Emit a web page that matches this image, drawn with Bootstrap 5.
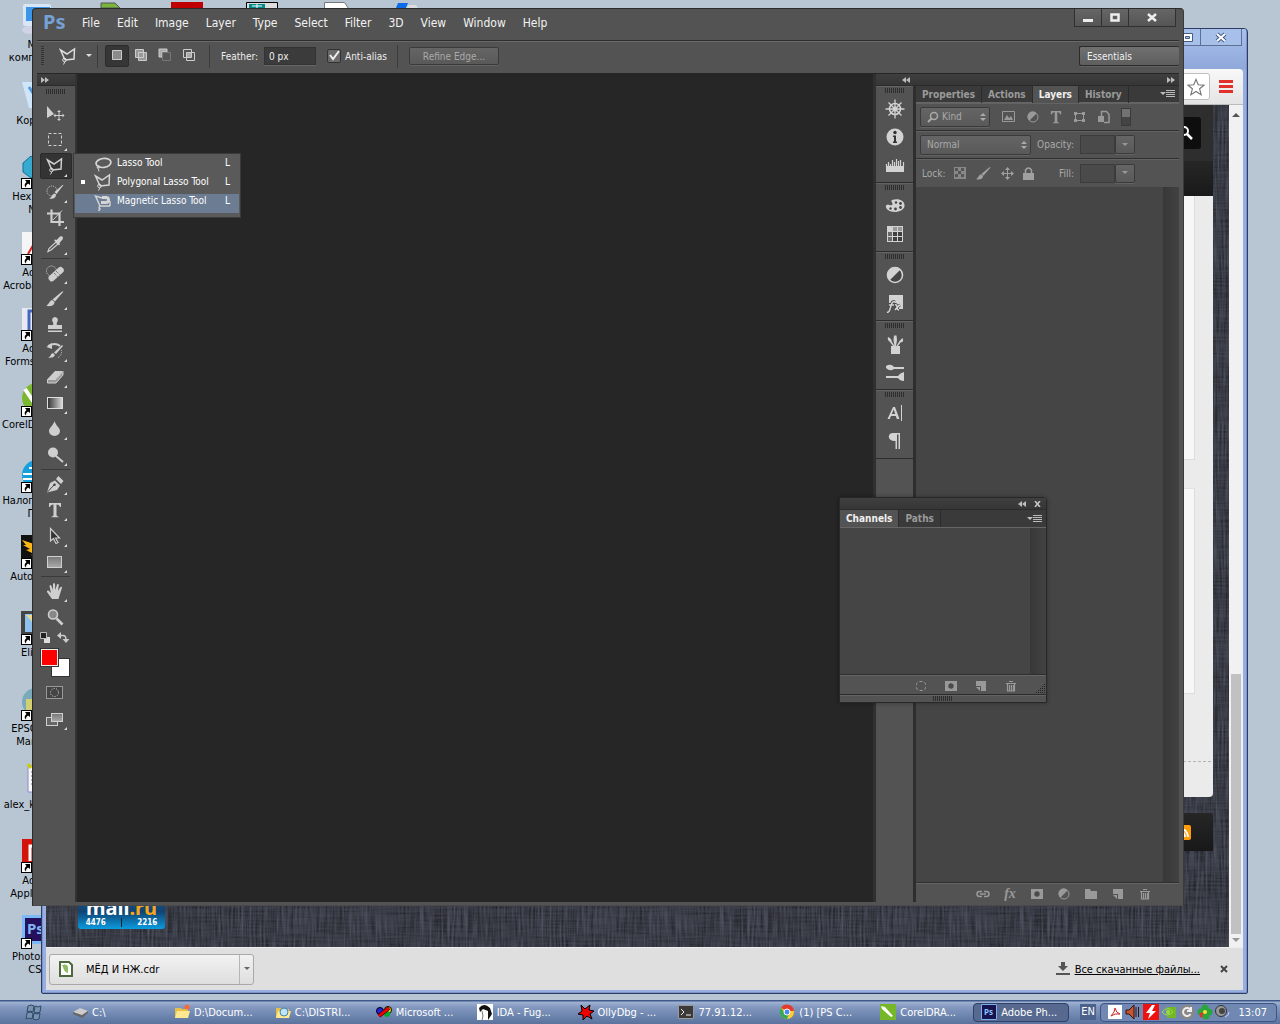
<!DOCTYPE html>
<html lang="en">
<head>
<meta charset="utf-8">
<meta name="viewport" content="width=device-width, initial-scale=1">
<title>Desktop</title>
<link href="https://cdn.jsdelivr.net/npm/bootstrap@5.3.0/dist/css/bootstrap.min.css" rel="stylesheet">
<style>
:root{--ui:"DejaVu Sans Condensed","Noto Sans","DejaVu Sans",sans-serif;--face:#535353;--edge:#2b2b2b;--ink:#cfcfcf}
body{font-family:var(--ui);font-size:11px;line-height:13px;color:#000;background:#b8c6d4}
button,input,select{font-family:inherit;font-size:inherit;line-height:inherit}
svg{display:block;flex:none}
a{color:inherit;text-decoration:none}
.desk{height:100vh;min-height:700px}
.desk-area{position:relative;min-height:0;overflow:hidden}
/* desktop shortcuts */
.shortcuts{position:absolute;left:0;top:3px;width:76px}
.shortcut{height:76px;text-align:center;white-space:nowrap;color:#000}
.shortcut .pic{position:relative;width:34px;height:32px;margin:0 auto 3px;display:block}
.pic.linked::after{content:"";position:absolute;left:0;bottom:-2px;width:11px;height:11px;background:#fff url("data:image/svg+xml,%3Csvg xmlns='http://www.w3.org/2000/svg' viewBox='0 0 9 9'%3E%3Cpath d='M3 1h5v5L6 4.500Q3.500 6 4 8.500 1 6 4.500 3z'/%3E%3C/svg%3E") center/9px no-repeat;border:1px solid #000}
/* windows */
.peek{position:absolute;left:100px;top:0}
.win{position:absolute;overflow:hidden}
.browser{left:41px;top:28px;right:32px;bottom:6px;border:1px solid #2c3c66;border-radius:4px 4px 2px 2px;background:#97aee0;padding:0 4px 3px;box-shadow:inset 0 0 0 1px #7f93c4}
.b-title{height:40px;background:linear-gradient(#a9c1ec,#8fa8da);margin:0 -3px}
.b-ctl{height:17px;width:28px;border:1px solid #5f7094;border-top:0;background:#a7c0ea;padding:0;display:flex;align-items:center;justify-content:center}
.b-ctl.wide{width:41px;border-left:0;margin-right:4px}
.b-tools{height:36px;background:linear-gradient(#f8f8f8,#e4e4e4);border-bottom:1px solid #bbb;border-radius:0 4px 0 0;padding-right:10px}
.omni{height:27px;width:600px;background:#fff;border:1px solid #bfbfbf;border-radius:3px;padding:0 4px}
.burger{width:14px;height:13px;border:0;padding:0;background:repeating-linear-gradient(#e0312a 0 3px,transparent 3px 5px);margin-left:9px}
.linen{background:#33353d url("data:image/svg+xml,%3Csvg xmlns='http://www.w3.org/2000/svg' width='300' height='300'%3E%3Cfilter id='a' color-interpolation-filters='sRGB' x='0' y='0' width='1' height='1'%3E%3CfeTurbulence type='fractalNoise' baseFrequency='.03 .5' numOctaves='2' stitchTiles='stitch'/%3E%3CfeColorMatrix values='0 0 0 0 .1 0 0 0 0 .1 0 0 0 0 .12 1.500 0 0 0 -.5'/%3E%3C/filter%3E%3Cfilter id='b' color-interpolation-filters='sRGB' x='0' y='0' width='1' height='1'%3E%3CfeTurbulence type='fractalNoise' baseFrequency='.5 .03' numOctaves='2' stitchTiles='stitch'/%3E%3CfeColorMatrix values='0 0 0 0 .32 0 0 0 0 .34 0 0 0 0 .4 1.500 0 0 0 -.4'/%3E%3C/filter%3E%3Crect width='300' height='300' filter='url(%23a)'/%3E%3Crect width='300' height='300' filter='url(%23b)'/%3E%3C/svg%3E")}
.site{margin:0 16px 0 32px}
.s-head{height:91px;background:linear-gradient(#2e2e2e 0 62%,#262626 62%,#191919);padding:12px 12px 0 0}
.s-find{width:200px;height:32px;background:#0e0e0e;border-radius:3px}
.s-body{height:601px;background:#ebebeb;border-radius:0 0 4px 4px;padding-right:18px}
.s-box{background:#f7f7f7;border:1px solid #ddd;border-top:0}
.s-dash{border-top:1px dashed #b5b5b5;margin:67px -16px 0 0}
.s-foot{height:38px;margin-top:16px;background:linear-gradient(#262626,#181818);border-radius:3px 3px 0 0;padding-right:22px}
.rating{width:87px;height:44px;border-radius:3px;background:linear-gradient(#2a6a9d,#0f4372 60%,#0b9be0);color:#fff;margin-bottom:18px}
.rating b{font:700 20px/20px "Noto Sans",sans-serif;height:33px;display:flex;align-items:flex-end;justify-content:center}
.rating i{color:#f9a51b;font-style:normal}
.rating .num{font-size:8px;line-height:9px;font-weight:700}
.rating .bar{width:1px;background:#123}
.b-scroll{width:14px;background:#f1f1f1;color:#555}
.b-thumb{width:10px;background:#c1c1c1;height:260px}
.b-down{height:43px;background:#dfdfdf;border-top:1px solid #eee;padding:0 15px 0 3px}
.dl{width:205px;height:31px;border:1px solid #a9a9a9;border-radius:3px;background:linear-gradient(#f2f2f2,#dedede);padding:0;gap:12px}
.dl-more{width:14px;height:29px;border-left:1px solid #b5b5b5}
.dl-all{margin:0 20px 0 5px}
/* image editor */
.editor{left:32px;top:8px;right:96px;bottom:94px;background:var(--face);border:1px solid var(--edge);border-bottom-color:#4a4a4a;border-right-color:#3a3a3a;border-radius:4px 4px 0 0;padding:0 4px 3px;color:#ddd}
.titlebar{height:31px;padding-left:6px}
.brand{font:700 20px/26px "Noto Sans",sans-serif;color:#76a1d5;width:30px}
.menu a{font-size:12px;line-height:15px;padding:7px 8px 0 9px;color:#f2f2f2;white-space:nowrap}
.w-ctl{height:18px;width:27px;border:1px solid #303030;border-top:0;border-left-width:0;background:linear-gradient(#666,#555);padding:0;display:flex;align-items:center;justify-content:center}
.w-ctl.wide{width:47px}
.w-ctls{border-left:1px solid #303030;margin-right:3px}
.optbar{height:33px;border-top:1px solid #2e2e2e;box-shadow:inset 0 1px #6a6a6a;font-size:10px;color:#eee;padding:0 0 2px 4px;background:var(--face)}
.vgrip{width:3px;height:20px;background:repeating-linear-gradient(#333 0 1px,transparent 1px 2px);margin-right:14px}
.vsep{width:1px;height:23px;background:#3c3c3c;margin:0 11px 0 8px}
.vsep.tight{margin:0 7px 0 5px}
.mode{width:24px;height:22px;border:1px solid transparent;background:none;padding:0 0 2px;display:flex;align-items:center;justify-content:center;border-radius:2px}
.mode.on{background:#363636;border-color:#2c2c2c}
.feather-l{width:43px}
.aa-l{width:44px}
.numbox{width:52px;height:18px;background:#3b3b3b;border:1px solid #333;color:#f0f0f0;padding:0 4px;border-radius:0;box-shadow:0 1px #666}
.tick{appearance:none;width:14px;height:14px;margin:0 4px 0 11px;border:1px solid #333;border-radius:2px;background:#6a6a6a url("data:image/svg+xml,%3Csvg xmlns='http://www.w3.org/2000/svg' viewBox='0 0 12 12'%3E%3Cpath d='M2 5l3 4 6-8' fill='none' stroke='%23eee' stroke-width='2'/%3E%3C/svg%3E") center/12px no-repeat}
.ui-btn{border:1px solid #3a3a3a;border-radius:2px;background:linear-gradient(#656565,#595959);box-shadow:0 1px #636363}
.refine{width:90px;height:18px;color:#a9a9a9;padding:0}
.space{appearance:none;width:100px;height:20px;color:#f0f0f0;padding:0 7px;border-color:#2a2a2a;border-right:0;background:linear-gradient(#707070,#5e5e5e)}
.stage{min-height:0;border-top:1px solid #262626}
.cap{height:12px;background:linear-gradient(#3f3f3f,#363636);border-bottom:1px solid #2b2b2b;color:#bbb}
.hgrip{width:20px;height:5px;background:repeating-linear-gradient(90deg,#2e2e2e 0 1px,transparent 1px 2px);align-self:center}
.toolbox{width:38px;background:var(--face);box-shadow:inset 0 1px #333}
.toolbox .hgrip{margin:3px 0 7px}
.tool{position:relative;width:32px;height:26px;border:1px solid transparent;border-radius:2px;background:none;padding:0 2px 0 0;margin-left:3px;color:var(--ink);display:flex;align-items:center;justify-content:center;flex:none}
.tool.on{background:#343434;border-color:#2a2a2a}
.fly::after{content:"";position:absolute;right:4px;bottom:1px;border-top:3px solid transparent;border-right:3px solid #ddd}
.tsep{height:1px;background:#3a3a3a;margin:1px 5px 1px 4px;flex:none}
.mini{padding:2px 6px 0 3px}
.well{position:relative;width:30px;height:29px;margin:5px 0 3px 3px;flex:none}
.well span{position:absolute;width:19px;height:19px;border:1px solid #333}
.well .fg{left:0;top:0;background:red;box-shadow:inset 0 0 0 1px #eee}
.well .bgc{right:0;bottom:0;background:#fff}
.canvas-area{background:#262626;border-left:2px solid #333;min-width:0}
.dock{width:306px;border-left:3px solid #303030;background:var(--face)}
.dock .cap{padding:0 4px 0 26px}
.strip{width:38px;border-right:1px solid #2e2e2e}
.sgroup{border-bottom:1px solid #2d2d2d;box-shadow:inset 0 1px #636363;padding:2px 0 3px;flex:none}
.sgroup .hgrip{margin-bottom:2px}
.sicon{height:28px;width:100%;border:0;background:none;padding:0;color:#d2d2d2;display:flex;align-items:center;justify-content:center}
.panel{border-left:2px solid #2e2e2e;min-width:0}
.tabs{height:17px;background:#3a3a3a;font-weight:700;font-size:10px;border-bottom:1px solid #666;flex:none}
.tabs button{border:0;border-right:1px solid #2c2c2c;background:none;color:#9a9a9a;font-weight:700;padding:0 6px;height:17px;line-height:17px}
.tabs button.on{background:var(--face);color:#f0f0f0}
.prow{height:28px;border-bottom:1px solid #2f2f2f;box-shadow:inset 0 1px #636363;padding:0 4px;font-size:10px;color:#aaa;flex:none}
.prow label{width:43px;margin-right:6px;text-align:right;flex:none}
.prow .locks + label{width:40px}
.prow .filters{gap:11px;margin-left:12px;color:#999}
.prow .locks{gap:9px;color:#a0a0a0;flex:none}
.lock-l{width:34px;padding-left:2px;flex:none}
.pick{appearance:none;height:20px;color:#aaa;padding:0 6px;width:111px}
.pick.kind{width:70px;padding-left:21px}
.updn{position:relative}
.updn svg{position:absolute;right:4px;top:6px;pointer-events:none}
.updn .q{right:auto;left:7px;top:4px}
.pct{width:35px;height:19px;border:1px solid #3c3c3c;background:#4a4a4a;border-radius:0}
.drop{width:20px;height:19px;padding:0;color:#999;display:flex;align-items:center;justify-content:center}
.list-body{background:#454545;min-height:0}
.vscroll{width:16px;background:linear-gradient(90deg,#383838,#424242)}
.pfoot{height:20px;border-top:1px solid #2f2f2f;box-shadow:inset 0 1px #666;color:#999;flex:none;gap:16px;padding-top:2px}
.pfoot.lay{gap:13px;padding-right:27px}
.pfoot button{border:0;background:none;padding:0;color:inherit}
.pfoot .fx{font:italic 700 14px/16px "Liberation Serif",serif;width:14px}
.flyout{position:absolute;left:73px;top:153px;width:168px;height:65px;background:#5a5a5a;border:1px solid #3a3a3a;padding:2px 1px 0;font-size:10px;color:#fff}
.flyout a{height:19px;padding:0 9px 6px 6px}
.flyout a.hot{background:#6b7c93}
.flyout .dot{width:4px;height:4px;margin-right:8px}
.flyout svg{color:#d5d5d5;margin-right:4px}
.floatp{position:absolute;right:233px;top:497px;width:208px;height:206px;background:var(--face);border:1px solid #282828;border-radius:4px 4px 0 0;box-shadow:0 0 4px rgba(0,0,0,.35);color:#aaa}
.floatp .cap{gap:8px;padding-right:5px}
.floatp .tabs{height:18px}
.sizer{height:8px;border-top:1px solid #2b2b2b;box-shadow:inset 0 1px #636363}
/* taskbar */
.taskbar{height:24px;background:linear-gradient(#3f5a8a 0 1px,#a0b3d3 2px,#8398bf 30%,#6780aa 75%,#5b739c);color:#fff;font-size:11px;padding-right:3px}
.start{width:65px;height:24px;border:0;background:none;padding:0 0 0 25px}
.tasks{gap:6px;min-width:0}
.task{flex:1 1 0;min-width:0;height:19px;border:0;background:none;color:#fff;padding:0 0 0 8px;border-radius:4px;white-space:nowrap;text-align:left}
.task.on{background:#57698f;border:1px solid #2f4168;padding-left:7px}
.lang{width:16px;background:#4c628d;height:16px;margin:0 4px 0 11px;line-height:16px;text-align:center}
.tray{width:177px;height:19px;border:1px solid #3d5484;border-radius:4px;background:#7088b2;padding:0 9px 0 6px}
.tray .icons{gap:2px}
</style>
</head>
<body>
<svg width="0" height="0" class="position-absolute" aria-hidden="true">
<defs>
<linearGradient id="gr"><stop offset="0" stop-color="#333"/><stop offset="1" stop-color="#ddd"/></linearGradient>
<linearGradient id="gv" x2="0" y2="1"><stop offset="0" stop-color="#777"/><stop offset="1" stop-color="#aaa"/></linearGradient>
</defs>
<symbol id="move" viewBox="0 0 20 20"><path d="M2 2v12l7-4z" fill="currentColor"/><path d="M14 7v9M9.500 11.500h9" stroke="currentColor"/><path d="M14 6l-2 2h4zM14 17l-2-2h4zM8.500 11.500l2-2v4zM19.500 11.500l-2-2v4z" fill="currentColor"/></symbol>
<symbol id="marq" viewBox="0 0 20 20"><rect x="3.500" y="3.500" width="13" height="12" fill="none" stroke="currentColor" stroke-dasharray="3 2"/></symbol>
<symbol id="poly" viewBox="0 0 20 20"><path d="M7 14L2.500 4 9 8l7.500-5-.5 10-9 1" fill="none" stroke="currentColor" stroke-width="1.500"/><circle cx="6.500" cy="14" r="1.800" fill="none" stroke="currentColor"/><path d="M7 15.500l-1.500 3" stroke="currentColor"/></symbol>
<symbol id="lasso" viewBox="0 0 20 20"><ellipse cx="10.500" cy="10" rx="7.500" ry="4.500" fill="none" stroke="currentColor" stroke-width="1.700" transform="rotate(-8 10 10)"/><path d="M4 13q3-1 3 1t-3 .5q2 1 2 4" fill="none" stroke="currentColor"/></symbol>
<symbol id="mag" viewBox="0 0 20 20"><path d="M7 15L2.500 5 9 7M17 15l-10 0q-2 2 0 3l-1.500 2M17 10v5" fill="none" stroke="currentColor" stroke-width="1.400"/><path d="M9 6.500h4a2.500 2.500 0 010 5H8" fill="none" stroke="currentColor" stroke-width="3"/></symbol>
<symbol id="quick" viewBox="0 0 20 20"><circle cx="7" cy="9" r="5" fill="none" stroke="currentColor" stroke-dasharray="1 1"/><path d="M18.500 3l-7 9-2-2 8-7zM11 12.500c0 4-4 5-7 4 3-1 3-4 5-5z" fill="currentColor"/></symbol>
<symbol id="crop" viewBox="0 0 20 20"><path d="M2 5.500h12.500V18M6.500 1.500v12.500H19" fill="none" stroke="currentColor" stroke-width="2.200"/><path d="M8 12L17 2.500" stroke="currentColor"/></symbol>
<symbol id="drop" viewBox="0 0 20 20"><path d="M3 17.500l1-3L11 8l2 2-7 6z" fill="none" stroke="currentColor" stroke-width="1.200"/><path d="M10 5.500l1.500.5L15 2.500c2-1 4 1 2.500 3L14.500 9l.5 1.500-1 .8-5-5z" fill="currentColor"/></symbol>
<symbol id="heal" viewBox="0 0 20 20"><circle cx="6.500" cy="8" r="5" fill="none" stroke="currentColor" stroke-dasharray="1 1"/><rect x="2" y="8" width="18" height="6.500" rx="3" fill="currentColor" transform="rotate(-42 11 11)"/><path d="M9 10l4 4M11 8l4 4" stroke="#535353" stroke-dasharray="1 1"/></symbol>
<symbol id="brush" viewBox="0 0 20 20"><path d="M18.500 2.500l-8.500 10-2.500-2 9.500-8zM9.500 13c0 4-5 5-8.500 3.500 3-.5 3-4.500 6-5.500z" fill="currentColor"/></symbol>
<symbol id="stamp" viewBox="0 0 20 20"><path d="M10 2a3 3 0 012.500 4.500C11.500 8 11.500 9 12 10h5v4H3v-4h5c.5-1 .5-2-.5-3.500A3 3 0 0110 2zM3 15.500h14V17H3z" fill="currentColor"/></symbol>
<symbol id="hist" viewBox="0 0 20 20"><path d="M3 5q7-4 12 0" fill="none" stroke="currentColor" stroke-width="1.800"/><path d="M7 2v6L1.500 6z" fill="currentColor"/><path d="M18 5l-7 8-2-1.500L17 4zM10 14c-1 3-5 3-7 2.500 3-.5 2-3.500 5-4.500z" fill="currentColor"/><path d="M16.500 9q1 5-4 8" fill="none" stroke="currentColor" stroke-dasharray="1 1"/></symbol>
<symbol id="erase" viewBox="0 0 20 20"><path d="M2.500 12L10 4h8l-7 8z" fill="currentColor"/><path d="M2.500 12.500V16H11l7-8V4.500l-7 8z" fill="#999" stroke="currentColor"/></symbol>
<symbol id="grad" viewBox="0 0 20 20"><rect x="2.500" y="4.500" width="15" height="11" fill="url(#gr)" stroke="#ddd"/></symbol>
<symbol id="blur" viewBox="0 0 20 20"><path d="M9.500 2c1 4 5.500 7 5.500 10a5.500 5 0 01-11 0c0-3 4.500-6 5.500-10z" fill="currentColor"/></symbol>
<symbol id="dodge" viewBox="0 0 20 20"><circle cx="8" cy="7.500" r="5" fill="currentColor"/><path d="M11 11l7 6" stroke="currentColor" stroke-width="2"/></symbol>
<symbol id="pen" viewBox="0 0 20 20"><path d="M2 18.500L5 9l5-2.500 5 5L12 16zM11 5l2.500-3 5 5L16 10z" fill="currentColor"/><path d="M2.500 18L9 11" stroke="#444"/><circle cx="9.500" cy="10.800" r="1.300" fill="#444"/></symbol>
<symbol id="type" viewBox="0 0 20 20"><path d="M4 3h12v4h-1q-.5-2.500-3.500-2.500V15q0 1.500 2 1.500v.8h-7v-.8q2 0 2-1.500V4.500Q5.500 4.500 5 7H4z" fill="currentColor"/></symbol>
<symbol id="arrow" viewBox="0 0 20 20"><path d="M5.500 2.500v12.500l3-2.500 2.500 5 2-1-2.500-4.500h4z" fill="#333" stroke="currentColor" stroke-width="1.200"/></symbol>
<symbol id="rectt" viewBox="0 0 20 20"><rect x="2.500" y="4.500" width="14" height="11" fill="url(#gv)" stroke="currentColor"/></symbol>
<symbol id="hand" viewBox="0 0 20 20"><path d="M7 18L2 11q-.5-2 1.500-1.500L6 12 4.500 5q.8-1.800 2 0L8 9V3q1-1.800 2 0l.3 6L12 3.500q1.400-1.500 1.800.5L13 10l2.500-4q1.500-1 1.500.8L15 13l-1.500 5z" fill="currentColor"/></symbol>
<symbol id="zoomi" viewBox="0 0 20 20"><circle cx="8" cy="7.500" r="4.500" fill="#888" stroke="currentColor" stroke-width="1.600"/><path d="M11.500 11.500l6 6" stroke="currentColor" stroke-width="2.600"/></symbol>
<symbol id="qmask" viewBox="0 0 20 20"><rect x="1.500" y="3.500" width="16" height="12" fill="#444" stroke="#999"/><circle cx="9.500" cy="9.500" r="4" fill="none" stroke="#ddd" stroke-dasharray="1 1.500"/></symbol>
<symbol id="screen" viewBox="0 0 20 20"><rect x="1.500" y="8.500" width="11" height="8" fill="#666" stroke="currentColor"/><rect x="6.500" y="4.500" width="11" height="8" fill="url(#gv)" stroke="currentColor"/></symbol>
<symbol id="wheel" viewBox="0 0 20 20"><circle cx="10" cy="10" r="5.500" fill="none" stroke="currentColor" stroke-width="1.600"/><path d="M10 .5v19M.5 10h19M3.500 3.500l13 13M16.500 3.500l-13 13" stroke="currentColor" stroke-width="1.300"/><circle cx="10" cy="10" r="2.500" fill="currentColor"/></symbol>
<symbol id="info" viewBox="0 0 20 20"><circle cx="10" cy="10" r="8.500" fill="currentColor"/><path d="M8 8.500h3v6h1V16H8v-1.500h1V10H8z" fill="#333"/><circle cx="10" cy="5.500" r="1.700" fill="#333"/></symbol>
<symbol id="histo" viewBox="0 0 20 20"><path d="M1 11h18v6H1z" fill="currentColor"/><path d="M1.500 12V9M3.500 12V7M5.500 12V9M7.500 12V5M9.500 12V7M11.500 12V4M13.500 12V6M15.500 12V5M18.500 12V7" stroke="currentColor" stroke-width="1.200"/></symbol>
<symbol id="pal" viewBox="0 0 20 20"><path d="M7 4c6-2 13 0 12.500 6-.5 5-8 7-13.500 5.500C1 14 0 10 1.500 9 4 8 5 10 7 9s-2-4 0-5z" fill="currentColor"/><g fill="#444"><circle cx="11" cy="6.500" r="1.200"/><circle cx="15.500" cy="7.500" r="1.400"/><circle cx="15.500" cy="11.500" r="1.400"/><circle cx="10.500" cy="13" r="1.400"/><circle cx="5.500" cy="12.500" r="1.200"/></g></symbol>
<symbol id="sw" viewBox="0 0 20 20"><path d="M2 2h16v16H2z" fill="currentColor"/><path d="M8 8h4v4H8zM8 13h4v4H8zM13 13h4v4h-4zM13 8h4v4h-4z" fill="#3f3f3f"/><path d="M3 8h4v4H3zM3 13h4v4H3z" fill="#6a6a6a"/><path d="M8 3h4v4H8zM13 3h4v4h-4z" fill="#999"/></symbol>
<symbol id="adj" viewBox="0 0 20 20"><circle cx="10" cy="10" r="7.500" fill="#444" stroke="currentColor" stroke-width="1.600"/><path d="M15.500 4.500a7.500 7.500 0 00-11 11z" fill="currentColor"/></symbol>
<symbol id="sty" viewBox="0 0 20 20"><path d="M4 2h14v14h-4l-3-6H4z" fill="currentColor"/><path d="M2 19q2 1 3-3l2-6q1-2 3-1M4 12h5M10 12q2-1 2 2t2 3M15 12q-2 1-5 5" fill="none" stroke="#444" stroke-width="3"/><path d="M2 19q2 1 3-3l2-6q1-2 3-1M4 12h5M10 12q2-1 2 2t2 3M15 12q-2 1-5 5" fill="none" stroke="currentColor" stroke-width="1.500"/></symbol>
<symbol id="bset" viewBox="0 0 20 20"><path d="M6 12h9v8H6zM3 3q4 2 3.500 4L9.500 12H8L5 8Q2 6 3 3zM9 1.500h2.500L12 6l-1 6H9.500L8.500 6zM17.500 4q2 4-2 4.500L13 12h-1.500l3-5z" fill="currentColor"/></symbol>
<symbol id="bpre" viewBox="0 0 20 20"><path d="M1 4q5-3 8 1h10v2H9q-4 3-8-1zM1 14h12q2-3 6-4v9q-4 0-6-3H1z" fill="currentColor"/></symbol>
<symbol id="chr" viewBox="0 0 20 20"><path d="M2.500 16L8 4h2l4.500 12h-2.700l-1-3H6l-1.200 3zM6.800 11h3.400L8.700 6.500z" fill="currentColor"/><path d="M16.500 2v16" stroke="currentColor"/></symbol>
<symbol id="para" viewBox="0 0 20 20"><path d="M15 2v16h-1.500V3.500H12V18h-1.500v-8C2 10.500 2 2 8 2z" fill="currentColor"/></symbol>
<symbol id="mask" viewBox="0 0 14 14"><path d="M1 2h12v10H1z" fill="currentColor"/><circle cx="7" cy="7" r="2.700" fill="#4b4b4b"/></symbol>
<symbol id="newl" viewBox="0 0 14 14"><path d="M2 2h10v10H7V7H2z" fill="currentColor"/><path d="M2 8h4v4z" fill="currentColor"/></symbol>
<symbol id="bin" viewBox="0 0 14 14"><path d="M2 4.500h10M5 2.500h4M3.500 5v7h7V5M5.500 6v6M7.500 6v6M9.500 6v6" fill="none" stroke="currentColor" stroke-width="1.200"/></symbol>
<symbol id="dashc" viewBox="0 0 14 14"><rect x="2.500" y="2.500" width="9" height="9" rx="3" fill="none" stroke="currentColor" stroke-dasharray="3 2"/></symbol>
<symbol id="half" viewBox="0 0 14 14"><circle cx="7" cy="7" r="5" fill="none" stroke="currentColor"/><path d="M10.500 3.500a5 5 0 10-7 7z" fill="currentColor"/></symbol>
<symbol id="pmenu" viewBox="0 0 15 8"><path d="M0 2h6L3 5zM6 0h9v1H6zM6 2h9v1H6zM6 4h9v1H6zM6 6h9v1H6z" fill="#bbb"/></symbol>
<symbol id="ud" viewBox="0 0 6 8"><path d="M0 3l3-3 3 3zM0 5l3 3 3-3z" fill="#aaa"/></symbol>
<symbol id="dbl" viewBox="0 0 8 6"><path d="M0 0l4 3-4 3zM4 0l4 3-4 3z" fill="#bbb"/></symbol>
<symbol id="caret" viewBox="0 0 6 4"><path d="M0 0h6L3 3z" fill="currentColor"/></symbol>
<symbol id="fold" viewBox="0 0 16 16"><path d="M1 4h6l1 1h6v9H1z" fill="#e9bf4b"/><path d="M3 7h13l-2 7H1z" fill="#ffe88f"/></symbol>
</svg>

<div class="desk d-flex flex-column">
<main class="desk-area flex-grow-1">
  <nav class="shortcuts d-flex flex-column" aria-label="Desktop">
    <a href="#" class="shortcut"><span class="pic"><svg width="34" height="32"><rect x="2" y="1" width="28" height="22" rx="2" fill="#d8e6f5"/><path d="M5 4h24v14H5z" fill="#3b96ea"/><ellipse cx="8" cy="27" rx="7" ry="4" fill="#d0d3e5"/></svg></span>Мой<br>компьютер</a>
    <a href="#" class="shortcut"><span class="pic"><svg width="34" height="32"><path d="M1 3h28l-4 26H8z" fill="#cfe6fa"/><path d="M8 8l8 12 6-10" stroke="#5596dd" stroke-width="3" fill="none"/></svg></span>Корзина</a>
    <a href="#" class="shortcut"><span class="pic linked"><svg width="34" height="32"><path d="M2 8l8-7 8 7v9l-8 6-8-6zM12 14l9-7 8 7v9l-8 6-9-6z" fill="#35a9cf" stroke="#136f96"/></svg></span>Hex Editor<br>Neo</a>
    <a href="#" class="shortcut"><span class="pic linked"><svg width="34" height="32"><path d="M1 1h26v29H1z" fill="#f5f5f7"/><path d="M7 23l8-14 7 14" stroke="#d22" stroke-width="2" fill="none"/></svg></span>Adobe<br>Acrobat XI Pro</a>
    <a href="#" class="shortcut"><span class="pic linked"><svg width="34" height="32"><path d="M1 1h28v29H1z" fill="#e8eaf2"/><path d="M8 28V4h12" stroke="#4468c0" stroke-width="3" fill="none"/></svg></span>Adobe<br>FormsCentral</a>
    <a href="#" class="shortcut"><span class="pic linked"><svg width="34" height="32"><circle cx="16" cy="15" r="15" fill="#7cb82f"/><path d="M4 6l12 18" stroke="#fff" stroke-width="4"/></svg></span>CorelDRAW X6</a>
    <a href="#" class="shortcut"><span class="pic linked"><svg width="34" height="32"><circle cx="16" cy="16" r="15" fill="#16a0dd"/><path d="M2 15h28M2 20h28M8 9h20" stroke="#fff" stroke-width="2"/></svg></span>Налогоплат...<br>ПРО</a>
    <a href="#" class="shortcut"><span class="pic linked"><svg width="34" height="32"><path d="M0 0h32v31H0z" fill="#111"/><path d="M1 5l18 6v12l-9-3 3-1-8-4 4-1-7-4h3z" fill="#fdb515"/></svg></span>Autodesk 3</a>
    <a href="#" class="shortcut"><span class="pic linked"><svg width="34" height="32"><path d="M0 0h32v31H0z" fill="#444"/><path d="M4 3h24v18H4z" fill="#8fc1ef"/><path d="M5 4h9v10z" fill="#ead991"/></svg></span>Elixir 3</a>
    <a href="#" class="shortcut"><span class="pic linked"><svg width="34" height="32"><circle cx="15" cy="15" r="14" fill="#7aa9b9"/><path d="M5 12h16v12H5z" fill="#d2cf70"/></svg></span>EPSON File<br>Manager</a>
    <a href="#" class="shortcut"><span class="pic"><svg width="34" height="32"><path d="M7 3h22v26H7z" fill="#f7f7f7" stroke="#8b8bd0"/><path d="M10 9h9M10 13h9M10 17h9M10 21h9" stroke="#777"/><path d="M7 1l3 4" stroke="#cc0" stroke-width="3"/></svg></span>alex_kontakty</a>
    <a href="#" class="shortcut"><span class="pic linked"><svg width="34" height="32"><path d="M1 0h32v31H1z" fill="#d3120b"/><path d="M9 22V7h8v15" stroke="#fff" stroke-width="3" fill="none"/></svg></span>Adobe<br>Application</a>
    <a href="#" class="shortcut"><span class="pic linked"><svg width="34" height="32"><path d="M1 0h32v29H1z" fill="#7cb9f7"/><path d="M4 3h28v23H4z" fill="#25105d"/><text x="6" y="19" font-family="Noto Sans" font-weight="700" font-size="15" fill="#82b5f2">Ps</text></svg></span>Photoshop<br>CS6</a>
  </nav>
  <svg class="peek" width="320" height="8" viewBox="100 0 320 8"><path d="M101 3h14l5 5h-19z" fill="#79b53c" stroke="#555"/><path d="M171 2h32v6h-32z" fill="#c00000"/><path d="M246.500 2.500h31V9h-31z" fill="#ddd" stroke="#000"/><path d="M249 4h16v4h-16z" fill="#008a8a"/><path d="M252 6h10M257 4v4" stroke="#fff"/><path d="M324.500 2.500h20l4 6h-24z" fill="#fff" stroke="#777"/><path d="M398 3h10l-2 5h-10z" fill="#0b6be8"/><path d="M406 8l3-3h7l2 3z" fill="#ddd"/></svg>

  <section class="win browser d-flex flex-column" aria-label="Browser">
    <div class="b-title d-flex justify-content-end flex-shrink-0">
      <button class="b-ctl" aria-label="Maximize"><svg width="11" height="9"><path d="M.5.5h10v8h-10z" fill="#fff" stroke="#445c8c"/><path d="M3.500 3.500h4v2h-4z" fill="#a7c0ea" stroke="#445c8c"/></svg></button>
      <button class="b-ctl wide" aria-label="Close"><svg width="12" height="11"><path d="M2 2l8 7M10 2l-8 7" stroke="#445c8c" stroke-width="4"/><path d="M2 2l8 7M10 2l-8 7" stroke="#fff" stroke-width="2"/></svg></button>
    </div>
    <div class="b-tools d-flex align-items-center justify-content-end flex-shrink-0">
      <div class="omni d-flex align-items-center justify-content-end"><svg width="18" height="18" viewBox="0 0 20 20"><path d="M10 1.500l2.500 6 6.500.5-5 4 1.700 6.500L10 15l-5.700 3.500L6 12 1 8l6.500-.5z" fill="#fff" stroke="#777" stroke-width="1.300"/></svg></div>
      <button class="burger" aria-label="Menu"></button>
    </div>
    <div class="d-flex flex-grow-1 overflow-hidden">
      <div class="linen flex-grow-1 overflow-hidden d-flex flex-column">
        <div class="site d-flex flex-column flex-grow-1">
          <div class="s-head d-flex justify-content-end flex-shrink-0"><div class="s-find d-flex align-items-center justify-content-end pe-2"><svg width="14" height="14"><circle cx="5" cy="5" r="4" fill="none" stroke="#fff" stroke-width="2"/><path d="M8 8l5 5" stroke="#fff" stroke-width="2.500"/></svg></div></div>
          <div class="s-body flex-shrink-0"><div class="s-box" style="height:264px"></div><div class="s-box border-top" style="height:206px;margin-top:28px"></div><div class="s-dash"></div></div>
          <div class="s-foot d-flex align-items-center justify-content-end flex-shrink-0"><svg width="15" height="15"><rect width="15" height="15" rx="2" fill="#ff9c07"/><path d="M3 6a6 6 0 016 6M3 3a9 9 0 019 9" fill="none" stroke="#fff" stroke-width="2"/></svg></div>
          <div class="rating mt-auto flex-shrink-0"><b>mail<i>.ru</i></b><div class="d-flex justify-content-around"><span class="num">4476</span><span class="bar"></span><span class="num">2216</span></div></div>
        </div>
      </div>
      <div class="b-scroll d-flex flex-column align-items-center justify-content-between py-1"><svg class="mt-1" width="8" height="5"><path d="M0 4h8L4 0z" fill="#555"/></svg><div class="d-flex flex-column align-items-center"><div class="b-thumb mb-1"></div><svg width="8" height="5"><path d="M0 0h8L4 4z" fill="#999"/></svg></div></div>
    </div>
    <div class="b-down d-flex align-items-center flex-shrink-0">
      <button class="dl d-flex align-items-center"><svg class="ms-2" width="16" height="18"><path d="M2 2h9l3 3v11H2z" fill="#fff" stroke="#4b6a3b" stroke-width="2"/><path d="M4 5q6-2 6 3v5q-4-1-5-6z" fill="#8dbb64"/></svg><span>МЁД И НЖ.cdr</span><span class="dl-more ms-auto d-flex align-items-center justify-content-center"><svg width="6" height="4" color="#666"><use href="#caret"/></svg></span></button>
      <svg class="ms-auto" width="14" height="14"><path d="M5 0h4v4h3L7 9 2 4h3zM0 11h14v2H0z" fill="#555"/></svg>
      <a href="#" class="dl-all text-decoration-underline">Все скачанные файлы...</a>
      <button class="border-0 bg-transparent p-0" aria-label="Close bar"><svg width="8" height="8"><path d="M1 1l6 6M7 1L1 7" stroke="#444" stroke-width="2"/></svg></button>
    </div>
  </section>

  <section class="win editor d-flex flex-column" aria-label="Photoshop">
    <header class="titlebar d-flex flex-shrink-0">
      <span class="brand">Ps</span>
      <nav class="menu d-flex"><a href="#">File</a><a href="#">Edit</a><a href="#">Image</a><a href="#">Layer</a><a href="#">Type</a><a href="#">Select</a><a href="#">Filter</a><a href="#">3D</a><a href="#">View</a><a href="#">Window</a><a href="#">Help</a></nav>
      <div class="w-ctls d-flex ms-auto align-self-start"><button class="w-ctl" aria-label="Minimize"><svg width="10" height="10"><path d="M0 6h10v3H0z" fill="#eee"/></svg></button><button class="w-ctl" aria-label="Maximize"><svg width="10" height="9"><path d="M1.500 1.500h7v6h-7z" fill="none" stroke="#eee" stroke-width="2.500"/></svg></button><button class="w-ctl wide" aria-label="Close"><svg width="10" height="9"><path d="M1 1l8 7M9 1L1 8" stroke="#eee" stroke-width="2.500"/></svg></button></div>
    </header>
    <div class="optbar d-flex align-items-center flex-shrink-0">
      <span class="vgrip"></span>
      <svg width="20" height="20" color="#ddd"><use href="#poly"/></svg>
      <svg class="ms-2" width="6" height="4" color="#ddd"><use href="#caret"/></svg>
      <span class="vsep tight"></span>
      <button class="mode on" aria-label="New selection"><svg width="14" height="14"><path d="M2.500 2.500h9v9h-9z" fill="#8a8a8a" stroke="#ccc"/></svg></button>
      <button class="mode" aria-label="Add"><svg width="14" height="14"><path d="M1.500 1.500h8v8h-8zM4.500 4.500h8v8h-8z" fill="#999" stroke="#ccc"/></svg></button>
      <button class="mode" aria-label="Subtract"><svg width="14" height="14"><path d="M1 1h8v3H4v5H1z" fill="#aaa" stroke="#ccc"/><path d="M4.500 4.500h8v8h-8z" fill="#555" stroke="#777"/></svg></button>
      <button class="mode" aria-label="Intersect"><svg width="14" height="14"><path d="M1.500 1.500h8v8h-8zM4.500 4.500h8v8h-8z" fill="none" stroke="#ccc"/><path d="M5 5h4v4H5z" fill="#aaa"/></svg></button>
      <span class="vsep"></span>
      <label for="feather" class="feather-l">Feather:</label><input id="feather" class="numbox" value="0 px">
      <input type="checkbox" class="tick" id="aa" checked><label for="aa" class="aa-l">Anti-alias</label>
      <span class="vsep"></span>
      <button class="ui-btn refine" disabled>Refine Edge...</button>
      <select class="ui-btn space ms-auto" aria-label="Workspace"><option>Essentials</option></select>
    </div>
    <div class="stage d-flex flex-grow-1">
      <aside class="toolbox d-flex flex-column flex-shrink-0" aria-label="Tools">
        <div class="cap d-flex align-items-center ps-1"><svg width="8" height="6"><use href="#dbl"/></svg></div>
        <span class="hgrip"></span>
        <button class="tool" aria-label="Move"><svg width="20" height="20"><use href="#move"/></svg></button>
        <button class="tool fly" aria-label="Marquee"><svg width="20" height="20"><use href="#marq"/></svg></button>
        <button class="tool fly on" aria-label="Lasso"><svg width="20" height="20"><use href="#poly"/></svg></button>
        <button class="tool fly" aria-label="Quick selection"><svg width="20" height="20"><use href="#quick"/></svg></button>
        <button class="tool fly" aria-label="Crop"><svg width="20" height="20"><use href="#crop"/></svg></button>
        <button class="tool fly" aria-label="Eyedropper"><svg width="20" height="20"><use href="#drop"/></svg></button>
        <div class="tsep"></div>
        <button class="tool fly" aria-label="Healing"><svg width="20" height="20"><use href="#heal"/></svg></button>
        <button class="tool fly" aria-label="Brush"><svg width="20" height="20"><use href="#brush"/></svg></button>
        <button class="tool fly" aria-label="Stamp"><svg width="20" height="20"><use href="#stamp"/></svg></button>
        <button class="tool fly" aria-label="History brush"><svg width="20" height="20"><use href="#hist"/></svg></button>
        <button class="tool fly" aria-label="Eraser"><svg width="20" height="20"><use href="#erase"/></svg></button>
        <button class="tool fly" aria-label="Gradient"><svg width="20" height="20"><use href="#grad"/></svg></button>
        <button class="tool fly" aria-label="Blur"><svg width="20" height="20"><use href="#blur"/></svg></button>
        <button class="tool fly" aria-label="Dodge"><svg width="20" height="20"><use href="#dodge"/></svg></button>
        <div class="tsep"></div>
        <button class="tool fly" aria-label="Pen"><svg width="20" height="20"><use href="#pen"/></svg></button>
        <button class="tool fly" aria-label="Type"><svg width="20" height="20"><use href="#type"/></svg></button>
        <button class="tool fly" aria-label="Path selection"><svg width="20" height="20"><use href="#arrow"/></svg></button>
        <button class="tool fly" aria-label="Rectangle"><svg width="20" height="20"><use href="#rectt"/></svg></button>
        <div class="tsep"></div>
        <button class="tool fly" aria-label="Hand"><svg width="20" height="20"><use href="#hand"/></svg></button>
        <button class="tool" aria-label="Zoom"><svg width="20" height="20"><use href="#zoomi"/></svg></button>
        <div class="mini d-flex justify-content-between"><svg width="10" height="11"><path d="M4 5h6v6H4z" fill="#ddd"/><path d="M.5.5h6v6h-6z" fill="#222" stroke="#bbb"/></svg><svg width="12" height="11"><path d="M3 3.500h3q3 0 3 4" fill="none" stroke="#ccc" stroke-width="1.500"/><path d="M0 3.500L4 0v7zM5.500 7h7L9 11z" fill="#ccc"/></svg></div>
        <div class="well"><span class="bgc"></span><span class="fg"></span></div>
        <button class="tool" aria-label="Quick mask"><svg width="20" height="20"><use href="#qmask"/></svg></button>
        <button class="tool fly" aria-label="Screen mode"><svg width="20" height="20"><use href="#screen"/></svg></button>
      </aside>
      <div class="canvas-area flex-grow-1"></div>
      <aside class="dock d-flex flex-column flex-shrink-0">
        <div class="cap d-flex align-items-center justify-content-between flex-shrink-0"><svg width="8" height="6" viewBox="0 0 8 6"><path d="M4 0L0 3l4 3zM8 0L4 3l4 3z" fill="#bbb"/></svg><svg width="8" height="6"><use href="#dbl"/></svg></div>
        <div class="d-flex flex-grow-1 overflow-hidden">
          <div class="strip d-flex flex-column flex-shrink-0">
            <div class="sgroup d-flex flex-column"><span class="hgrip"></span><button class="sicon" aria-label="Navigator"><svg width="20" height="20"><use href="#wheel"/></svg></button><button class="sicon" aria-label="Info"><svg width="20" height="20"><use href="#info"/></svg></button><button class="sicon" aria-label="Histogram"><svg width="20" height="20"><use href="#histo"/></svg></button></div>
            <div class="sgroup d-flex flex-column"><span class="hgrip"></span><button class="sicon" aria-label="Color"><svg width="20" height="20"><use href="#pal"/></svg></button><button class="sicon" aria-label="Swatches"><svg width="20" height="20"><use href="#sw"/></svg></button></div>
            <div class="sgroup d-flex flex-column"><span class="hgrip"></span><button class="sicon" aria-label="Adjustments"><svg width="20" height="20"><use href="#adj"/></svg></button><button class="sicon" aria-label="Styles"><svg width="20" height="20"><use href="#sty"/></svg></button></div>
            <div class="sgroup d-flex flex-column"><span class="hgrip"></span><button class="sicon" aria-label="Brush"><svg width="20" height="20"><use href="#bset"/></svg></button><button class="sicon" aria-label="Brush presets"><svg width="20" height="20"><use href="#bpre"/></svg></button></div>
            <div class="sgroup d-flex flex-column"><span class="hgrip"></span><button class="sicon" aria-label="Character"><svg width="20" height="20"><use href="#chr"/></svg></button><button class="sicon" aria-label="Paragraph"><svg width="20" height="20"><use href="#para"/></svg></button></div>
          </div>
          <div class="panel d-flex flex-column flex-grow-1">
            <div class="tabs d-flex align-items-center"><button>Properties</button><button>Actions</button><button class="on">Layers</button><button>History</button><svg class="ms-auto me-1" width="15" height="8"><use href="#pmenu"/></svg></div>
            <div class="prow d-flex align-items-center">
              <span class="updn"><select class="pick kind ui-btn" aria-label="Filter kind"><option>Kind</option></select><svg class="q" width="12" height="12"><circle cx="7" cy="5" r="3.500" fill="none" stroke="#aaa" stroke-width="1.500"/><path d="M4.500 7.500L1 11" stroke="#aaa" stroke-width="2"/></svg><svg width="6" height="8"><use href="#ud"/></svg></span>
              <span class="filters d-flex align-items-center">
                <svg width="14" height="14"><path d="M.5 1.500h12v10H.5z" fill="none" stroke="currentColor"/><path d="M2 10l3-5 2 3 2-2 2 4z" fill="currentColor"/></svg>
                <svg width="12" height="14" viewBox="1 0 12 14"><use href="#half" width="14" height="14"/></svg>
                <svg width="12" height="14" viewBox="3 2 14 16"><use href="#type" width="20" height="20"/></svg>
                <svg width="13" height="14"><path d="M2.500 3.500h8v7h-8z" fill="none" stroke="currentColor"/><path d="M1 2h3v3H1zM9 2h3v3H9zM1 9h3v3H1zM9 9h3v3H9z" fill="currentColor"/></svg>
                <svg width="13" height="14"><path d="M4.500 6V1.500h5l2.500 3v8H7" fill="none" stroke="currentColor" stroke-width="1.500"/><path d="M1 6h6v6H1z" fill="currentColor"/></svg>
                <svg width="10" height="18"><path d="M.5.5h9v17h-9z" fill="#444" stroke="#3a3a3a"/><path d="M1 1h8v8H1z" fill="#727272"/></svg>
              </span>
            </div>
            <div class="prow d-flex align-items-center">
              <span class="updn"><select class="pick ui-btn" aria-label="Blend mode"><option>Normal</option></select><svg width="6" height="8"><use href="#ud"/></svg></span>
              <label for="op">Opacity:</label><input id="op" class="pct"><button class="drop ui-btn" aria-label="Opacity slider"><svg width="6" height="4"><use href="#caret"/></svg></button>
            </div>
            <div class="prow d-flex align-items-center border-bottom-0">
              <span class="lock-l">Lock:</span>
              <span class="locks d-flex align-items-center">
                <svg width="12" height="12"><path d="M0 0h12v12H0z" fill="#888"/><path d="M1 1h3v3H1zM7 1h3v3H7zM4 4h3v3H4zM1 7h3v3H1zM7 7h3v3H7z" fill="#555"/></svg>
                <svg width="17" height="17"><use href="#brush"/></svg>
                <svg width="13" height="13"><path d="M6.500 2v9M2 6.500h9" stroke="currentColor"/><path d="M6.500 0l2.500 3H4zM6.500 13L9 10H4zM0 6.500L3 4v5zM13 6.500L10 4v5z" fill="currentColor"/></svg>
                <svg width="11" height="13"><path d="M0 6h11v7H0z" fill="currentColor"/><path d="M2.500 6V3q3-4 6 0v3" fill="none" stroke="currentColor" stroke-width="1.500"/></svg>
              </span>
              <label for="fill">Fill:</label><input id="fill" class="pct"><button class="drop ui-btn" aria-label="Fill slider"><svg width="6" height="4"><use href="#caret"/></svg></button>
            </div>
            <div class="list-body flex-grow-1 d-flex justify-content-end"><div class="vscroll"></div></div>
            <div class="pfoot lay d-flex align-items-center justify-content-end">
              <button aria-label="Link"><svg width="14" height="14"><path d="M6 4.500H3.500a2.500 2.500 0 000 5H6M8 4.500h2.500a2.500 2.500 0 010 5H8M4 7h6" fill="none" stroke="currentColor" stroke-width="1.500"/></svg></button>
              <button class="fx">fx</button>
              <button aria-label="Mask"><svg width="14" height="14"><use href="#mask"/></svg></button>
              <button aria-label="Adjustment"><svg width="14" height="14"><use href="#half"/></svg></button>
              <button aria-label="Group"><svg width="14" height="14"><path d="M1 2h5l1 2h6v8H1z" fill="currentColor"/></svg></button>
              <button aria-label="New layer"><svg width="14" height="14"><use href="#newl"/></svg></button>
              <button aria-label="Delete"><svg width="14" height="14"><use href="#bin"/></svg></button>
            </div>
          </div>
        </div>
      </aside>
    </div>
  </section>

  <nav class="flyout" aria-label="Lasso tools">
    <a href="#" class="d-flex align-items-center"><span class="dot"></span><svg width="20" height="20"><use href="#lasso"/></svg>Lasso Tool<span class="ms-auto">L</span></a>
    <a href="#" class="d-flex align-items-center"><span class="dot bg-white"></span><svg width="20" height="20"><use href="#poly"/></svg>Polygonal Lasso Tool<span class="ms-auto">L</span></a>
    <a href="#" class="d-flex align-items-center hot"><span class="dot"></span><svg width="20" height="20"><use href="#mag"/></svg>Magnetic Lasso Tool<span class="ms-auto">L</span></a>
  </nav>

  <section class="floatp d-flex flex-column" aria-label="Channels">
    <div class="cap d-flex align-items-center justify-content-end flex-shrink-0"><svg width="8" height="6"><path d="M4 0L0 3l4 3zM8 0L4 3l4 3z" fill="#bbb"/></svg><svg width="7" height="6"><path d="M1 0l5 6M6 0L1 6" stroke="#ccc" stroke-width="1.500"/></svg></div>
    <div class="tabs d-flex align-items-center"><button class="on">Channels</button><button>Paths</button><svg class="ms-auto me-1" width="15" height="8"><use href="#pmenu"/></svg></div>
    <div class="list-body flex-grow-1 d-flex justify-content-end"><div class="vscroll"></div></div>
    <div class="pfoot d-flex align-items-center justify-content-end"><button aria-label="Load selection"><svg width="14" height="14"><use href="#dashc"/></svg></button><button aria-label="Save selection"><svg width="14" height="14"><use href="#mask"/></svg></button><button aria-label="New channel"><svg width="14" height="14"><use href="#newl"/></svg></button><button aria-label="Delete"><svg width="14" height="14"><use href="#bin"/></svg></button><svg class="align-self-end" width="12" height="12"><path d="M2 10.500h9M4 8.500h7M6 6.500h5M8 4.500h3M10 2.500h1" stroke="#222" stroke-dasharray="1 1"/></svg></div>
    <div class="sizer d-flex justify-content-center"><span class="hgrip"></span></div>
  </section>
</main>

<footer class="taskbar d-flex align-items-center flex-shrink-0">
  <button class="start" aria-label="Start"><svg width="18" height="17"><path d="M3 2q3-2 6 0l-1 6q-3-2-6 0zM10 2q3 2 6 0l-1 6q-3 2-6 0zM2 9q3-2 6 0l-1 6q-3-2-6 0zM9 9q3 2 6 0l-1 6q-3 2-6 0z" fill="#7a93ad" stroke="#2f4a6b"/></svg></button>
  <div class="tasks d-flex flex-grow-1">
    <button class="task d-flex align-items-center gap-1"><svg width="15" height="16"><path d="M0 8l7-4 8 3-6 5z" fill="#ccc"/><path d="M0 8l9 3v3L0 10zM9 11l6-4v2l-6 5z" fill="#666"/></svg>C:\</button>
    <button class="task d-flex align-items-center gap-1"><svg width="16" height="16"><use href="#fold"/><circle cx="13" cy="3" r="2.500" fill="#f63"/></svg>D:\Docum...</button>
    <button class="task d-flex align-items-center gap-1"><svg width="16" height="16"><use href="#fold"/><circle cx="9" cy="8" r="4" fill="#bfe3f7" stroke="#48a"/></svg>C:\DISTRI...</button>
    <button class="task d-flex align-items-center gap-1"><svg width="16" height="16"><circle cx="4" cy="7" r="3.500" fill="#22d" stroke="#000"/><circle cx="12" cy="6" r="3.500" fill="#ee0" stroke="#000"/><circle cx="11" cy="10" r="3" fill="#0a3"/><path d="M3 12L13 4" stroke="#000" stroke-width="4"/><path d="M3 12L13 4" stroke="#e00" stroke-width="3"/></svg>Microsoft ...</button>
    <button class="task d-flex align-items-center gap-1"><svg width="16" height="16"><path d="M0 0h16v16H0z" fill="#fff"/><path d="M2 4q5-6 11 0l2 6-4 6 0-5 0-4-5-2-3 3z" fill="#111"/><path d="M5 7l1 5-1 4" stroke="#777" fill="none"/></svg>IDA - Fug...</button>
    <button class="task d-flex align-items-center gap-1"><svg width="16" height="16"><path d="M3 1l4 4 5-4-1 5 5 1-4 3 2 5-5-3-4 4v-5L0 10l4-3z" fill="#e00" stroke="#000"/></svg>OllyDbg - ...</button>
    <button class="task d-flex align-items-center gap-1"><svg width="16" height="16"><path d="M.5 1.500h15v13H.5z" fill="#3c3a38" stroke="#999"/><path d="M3 5l3 3-3 3M8 11h5" fill="none" stroke="#eee"/></svg>77.91.12...</button>
    <button class="task d-flex align-items-center gap-1"><svg width="16" height="16"><circle cx="8" cy="8" r="7" fill="#fc3"/><path d="M2 4a7 7 0 0113 3H8z" fill="#e33b2e"/><path d="M2 4a7 7 0 006 11l2-5-4-1z" fill="#3aa757"/><circle cx="8" cy="8" r="3" fill="#4a8af4" stroke="#fff"/></svg>(1) [PS C...</button>
    <button class="task d-flex align-items-center gap-1"><svg width="16" height="16"><path d="M0 0h16v16H0z" fill="#76b72a"/><path d="M1 2l4 1 8 9-2 1-9-8z" fill="#fff"/></svg>CorelDRA...</button>
    <button class="task on d-flex align-items-center gap-1"><svg width="16" height="16"><path d="M.5.5h15v15H.5z" fill="#16134f" stroke="#7ab0ee"/><text x="3" y="11" font-size="8" font-weight="700" font-family="Noto Sans" fill="#8cc4ff">Ps</text></svg>Adobe Ph...</button>
  </div>
  <span class="lang">EN</span>
  <div class="tray d-flex align-items-center">
    <span class="icons d-flex"><svg width="16" height="16"><path d="M1 1h14v14H1z" fill="#fff"/><path d="M4 12q4-4 4-8 1 5 5 6-5-1-9 2z" fill="none" stroke="#c22"/></svg><svg width="16" height="16"><path d="M1 6h3l5-5v14l-5-5H1z" fill="#c5552c" stroke="#311"/><path d="M11 3v10M13.500 3v10" stroke="#311"/></svg><svg width="16" height="16"><path d="M0 0h16v16H0z" fill="#e11"/><path d="M9 1L3 9h4l-2 6 8-8H9l3-6z" fill="#fff"/></svg><svg width="16" height="16"><path d="M6 3h9v11H6z" fill="#76b72a"/><path d="M1 8q6-7 11 0-6 6-11 0z" fill="none" stroke="#9d4"/><circle cx="7" cy="8" r="2" fill="#9d4"/></svg><svg width="16" height="16"><circle cx="8" cy="8" r="7.500" fill="#888"/><path d="M11.500 6a4 4 0 100 4M12 3v4H8" fill="none" stroke="#eee" stroke-width="2"/></svg><svg width="16" height="16"><circle cx="8" cy="4" r="3.500" fill="#2aa53c"/><circle cx="12" cy="8" r="3.500" fill="#2aa53c"/><circle cx="4" cy="8" r="3.500" fill="#2aa53c"/><circle cx="5" cy="11" r="2.500" fill="#d33"/><circle cx="9" cy="12" r="3.500" fill="#2aa53c"/><circle cx="8" cy="8" r="2" fill="#fd3"/></svg><svg width="16" height="16"><circle cx="6" cy="7" r="5.500" fill="#999" stroke="#333"/><circle cx="7" cy="7" r="3" fill="#444"/><path d="M10 13q4-1 4-5" stroke="#bcf" fill="none"/></svg></span>
    <span class="ms-auto">13:07</span>
  </div>
</footer>
</div>
<script src="https://cdn.jsdelivr.net/npm/bootstrap@5.3.0/dist/js/bootstrap.bundle.min.js"></script>
</body>
</html>
